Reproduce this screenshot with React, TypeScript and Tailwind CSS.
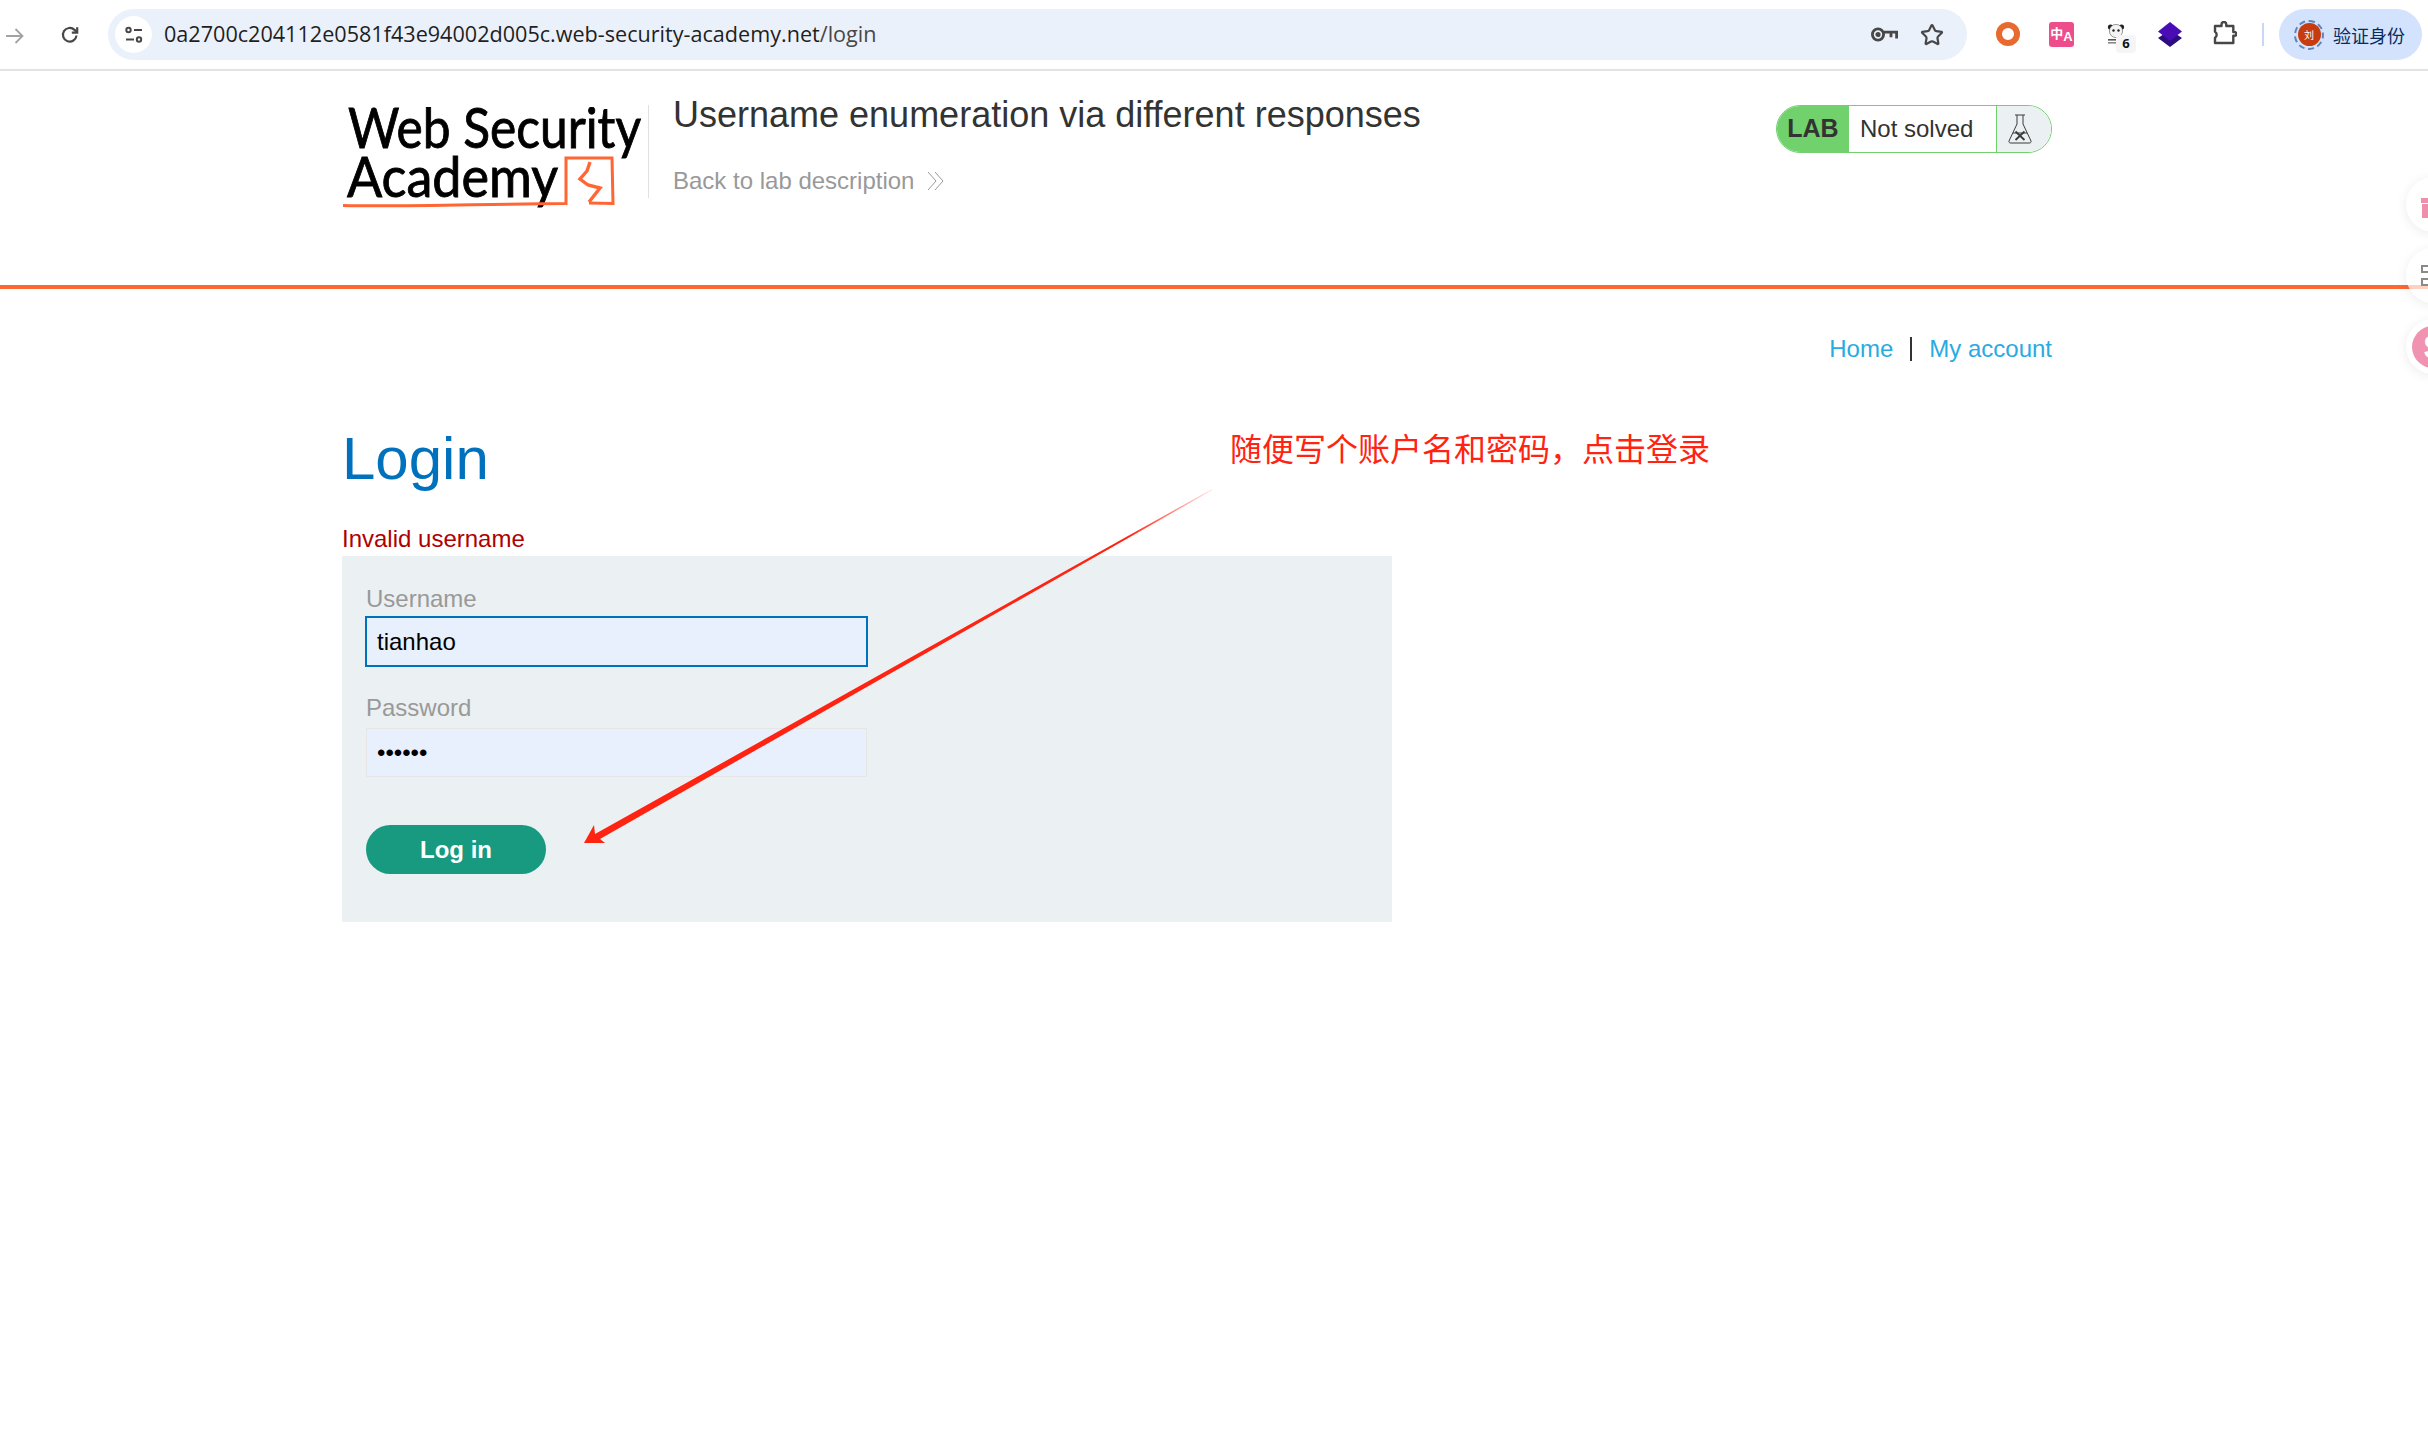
import { Star } from 'lucide-react'

const sans = "font-['Liberation_Sans',Arial,sans-serif]"

function BackArrow() {
  return (
    <svg width="18" height="16" viewBox="0 0 18 16" fill="none" stroke="#a3a3a3" strokeWidth="1.8">
      <path d="M0 8h16M9.5 1l7 7-7 7" />
    </svg>
  )
}

function Reload() {
  return (
    <svg width="20" height="20" viewBox="0 0 20 20" fill="none" stroke="#474747" strokeWidth="2.2">
      <path d="M16.5 10.5a6.8 6.8 0 1 1-2-5.6l2.5 2.4" />
      <path d="M17.2 2.2v5.4h-5.4" />
    </svg>
  )
}

function Tune() {
  return (
    <svg width="20" height="20" viewBox="0 0 20 20" fill="none" stroke="#474747" strokeWidth="2">
      <circle cx="4.5" cy="5" r="2.2" />
      <path d="M10 5h8M2 14.5h8" />
      <circle cx="15" cy="14.5" r="2.2" />
    </svg>
  )
}

function KeyIcon() {
  return (
    <svg width="27" height="15" viewBox="0 0 27 15" fill="none" stroke="#474747" strokeWidth="2.8">
      <circle cx="7" cy="7.5" r="5.6" />
      <circle cx="7" cy="7.5" r="1.2" fill="#474747" />
      <path d="M12.6 5.2h13v6.4M20 5.2v5" />
    </svg>
  )
}

function Panda() {
  return (
    <svg width="18" height="20" viewBox="0 0 18 20">
      <circle cx="3.5" cy="3" r="2.6" fill="#222" />
      <circle cx="14.5" cy="3" r="2.6" fill="#222" />
      <circle cx="9" cy="7" r="6.6" fill="#f4f4f4" stroke="#555" strokeWidth="0.6" />
      <circle cx="6.5" cy="6.5" r="1.2" fill="#222" />
      <circle cx="11.5" cy="6.5" r="1.2" fill="#222" />
      <rect x="1" y="15" width="13" height="1.6" fill="#555" />
      <rect x="1" y="18" width="13" height="1.6" fill="#888" />
    </svg>
  )
}

function Layers() {
  return (
    <svg width="24" height="25" viewBox="0 0 24 25">
      <path d="M12 8 24 16 12 25 0 16Z" fill="#2b0d80" />
      <path d="M12 0 24 9.5 12 19 0 9.5Z" fill="#4a0db5" />
    </svg>
  )
}

function PuzzleIcon() {
  return (
    <svg width="24" height="24" viewBox="0 0 24 24" fill="none" stroke="#474747" strokeWidth="2.4" strokeLinejoin="round">
      <path d="M2 5h6.5V3.4a2.4 2.4 0 0 1 4.8 0V5h7v6h1.2a1.9 1.9 0 0 1 0 3.8h-1.2V22H2v-5.2a3.2 3.2 0 0 0 1.6-3 3.2 3.2 0 0 0-1.6-3Z" />
    </svg>
  )
}

function Toolbar() {
  return (
    <div className="flex h-[71px] items-start border-b-2 border-[#e3e3e3] bg-white pt-[9px]">
      <div className="ml-[6px] mt-[19px] flex w-[18px]"><BackArrow /></div>
      <div className="ml-[36px] mt-[16px] flex w-[20px]"><Reload /></div>
      <div className="ml-[28px] flex h-[51px] w-[1859px] items-center rounded-full bg-[#ebf1fb] pl-[7px] pr-[23px]">
        <div className="flex h-[37px] w-[37px] items-center justify-center rounded-full bg-white"><Tune /></div>
        <span className="ml-[12px] font-['Open_Sans',sans-serif] text-[21.6px] text-[#1f1f1f]">
          0a2700c204112e0581f43e94002d005c.web-security-academy.net<span className="text-[#474747]">/login</span>
        </span>
        <div className="ml-auto flex items-center gap-[22px]">
          <KeyIcon />
          <Star size={24} strokeWidth={2.2} className="text-[#474747]" />
        </div>
      </div>
      <div className="ml-[29px] mt-[13px] h-[24px] w-[24px] rounded-full border-[6px] border-[#e96a2e]" />
      <div className="ml-[29px] mt-[13px] flex h-[25px] w-[25px] items-center justify-center rounded-[3px] bg-[#ee4d8c] text-[13px] font-bold leading-none text-white">
        <span className="mb-[4px] font-['Noto_Sans_CJK_SC',sans-serif]">中</span>
        <span className={`mt-[4px] ${sans}`}>A</span>
      </div>
      <div className="relative ml-[33px] mt-[15px] h-[20px] w-[18px]">
        <Panda />
        <span className="absolute left-[9px] top-[11px] flex h-[18px] w-[20px] items-center justify-center rounded-[4px] bg-[#f5f5f5] font-['Open_Sans',sans-serif] text-[13px] font-bold text-[#111]">6</span>
      </div>
      <div className="ml-[33px] mt-[13px] flex"><Layers /></div>
      <div className="ml-[31px] mt-[12px] flex"><PuzzleIcon /></div>
      <div className="ml-[25px] mt-[14px] h-[23px] w-[2px] bg-[#c7d7f5]" />
      <div className="ml-[15px] flex h-[51px] w-[143px] items-center rounded-full bg-[#d3e3fd] pl-[15px]">
        <div className="flex h-[30px] w-[30px] items-center justify-center rounded-full border-2 border-dashed border-[#5f82b8]">
          <div className="flex h-[23px] w-[23px] items-center justify-center rounded-full bg-[#c63c0e] font-['Noto_Sans_CJK_SC',sans-serif] text-[10px] text-white">刘</div>
        </div>
        <span className="ml-[9px] font-['Noto_Sans_CJK_SC',sans-serif] text-[18px] leading-none text-[#0a2a5e]">验证身份</span>
      </div>
    </div>
  )
}

function Logo() {
  return (
    <svg width="302" height="104" viewBox="0 0 302 104" className="mt-[36px] shrink-0">
      <text x="6" y="41" fontFamily="Lato, sans-serif" fontSize="57" fill="#000" stroke="#000" strokeWidth="0.9" textLength="293" lengthAdjust="spacingAndGlyphs">Web Security</text>
      <text x="5" y="90" fontFamily="Lato, sans-serif" fontSize="57" fill="#000" stroke="#000" strokeWidth="0.9" textLength="211" lengthAdjust="spacingAndGlyphs">Academy</text>
      <path d="M1 98.5C60 100 140 97 224 96.5V51h46l1 45.5-24-.5" fill="none" stroke="#ff6633" strokeWidth="3" />
      <path d="M248 55l-3 9-7 8 8 6 12 3-11 14" fill="none" stroke="#ff6633" strokeWidth="3.4" />
    </svg>
  )
}

function Flask() {
  return (
    <svg width="24" height="30" viewBox="0 0 24 30" fill="none" stroke="#3a3a3a" strokeWidth="1">
      <path d="M7 1h10M9 1v9L1 27a1.5 1.5 0 0 0 1.5 2h19a1.5 1.5 0 0 0 1.5-2L15 10V1" />
      <path d="M5 19h14" />
      <path d="M7.5 17.5 16.5 26M16.5 17.5 7.5 26" strokeWidth="1.8" />
    </svg>
  )
}

function LabStatus() {
  return (
    <div className="mt-[34px] flex h-[48px] w-[276px] overflow-hidden rounded-full border border-[#70d16d] bg-white">
      <div className="flex w-[72px] items-center justify-center bg-[#70d16d] text-[25px] font-bold text-[#333332]">LAB</div>
      <div className="flex flex-1 items-center pl-[11px] text-[24px] text-[#333332]">Not solved</div>
      <div className="flex w-[55px] items-center justify-center border-l border-[#70d16d] bg-[#ebf0f2] pr-[9px]"><Flask /></div>
    </div>
  )
}

function Header() {
  return (
    <div className="ml-[342px] flex h-[214px] w-[1710px] items-start">
      <Logo />
      <div className="ml-[4px] mt-[34px] h-[93px] w-px bg-[#e0e0e0]" />
      <div className="ml-[24px] mt-[22px]">
        <h2 className="text-[36px] leading-[44px] text-[#333332]">Username enumeration via different responses</h2>
        <div className="mt-[26px] flex items-center text-[24px] leading-[36px] text-[#999]">
          Back to lab description
          <svg width="18" height="18" viewBox="0 0 18 18" fill="none" stroke="#999" strokeWidth="1" className="ml-[13px]">
            <path d="M1 0l8 9-8 9M8 0l8 9-8 9" />
          </svg>
        </div>
      </div>
      <div className="ml-auto"><LabStatus /></div>
    </div>
  )
}

function FloatingButtons() {
  return (
    <div className="absolute left-[2406px] top-[177px] flex flex-col gap-[16px]">
      <div className="flex h-[55px] w-[55px] items-center rounded-full bg-white pl-[15px] shadow-[0_2px_12px_rgba(0,0,0,0.08)]">
        <svg width="20" height="26" viewBox="0 0 20 26" fill="#ef8fae">
          <rect x="0" y="6" width="20" height="5" />
          <rect x="1" y="12" width="19" height="14" />
          <path d="M8 6c1-4 5-6 8-5" fill="none" stroke="#ef8fae" strokeWidth="2" />
        </svg>
      </div>
      <div className="flex h-[55px] w-[55px] flex-col justify-center gap-[5px] rounded-full bg-white/70 pl-[15px] shadow-[0_2px_12px_rgba(0,0,0,0.08)]">
        <div className="h-[8px] w-[14px] border-2 border-[#8a8a8a]" />
        <div className="h-[8px] w-[14px] border-2 border-[#8a8a8a]" />
      </div>
      <div className="flex h-[55px] w-[55px] items-center rounded-full bg-white pl-[6px] shadow-[0_2px_12px_rgba(0,0,0,0.08)]">
        <div className="flex h-[42px] w-[42px] items-center justify-center rounded-full bg-[#ef93b0] text-[32px] font-bold leading-none text-white">$</div>
      </div>
    </div>
  )
}

function Arrow() {
  return (
    <svg width="2428" height="1435" viewBox="0 0 2428 1435" className="pointer-events-none absolute left-0 top-0">
      <defs>
        <linearGradient id="fade" gradientUnits="userSpaceOnUse" x1="1212" y1="489" x2="1130" y2="541">
          <stop offset="0" stopColor="#ff2312" stopOpacity="0.1" />
          <stop offset="1" stopColor="#ff2312" />
        </linearGradient>
      </defs>
      <path d="M584 843 594 825 595 834 1212 489 1212.5 490 600 839 605 843Z" fill="url(#fade)" />
    </svg>
  )
}

function LoginForm() {
  return (
    <div className="h-[366px] w-[1050px] bg-[#ebf0f2] px-[24px] pt-[26px]">
      <label className="block text-[24px] leading-[34px] text-[#999]">Username</label>
      <div className="ml-[-1px] flex h-[51px] w-[503px] items-center border-2 border-[#0071bc] bg-[#e8f0fe] pl-[10px] text-[24px] text-black">tianhao</div>
      <label className="mt-[25px] block text-[24px] leading-[32px] text-[#999]">Password</label>
      <div className="mt-[4px] flex h-[49px] w-[501px] items-center border border-[#e6e6e6] bg-[#e8f0fe] pl-[10px] text-[24px] leading-none text-black">••••••</div>
      <button className="mt-[48px] flex h-[49px] w-[180px] items-center justify-center rounded-full bg-[#179a7f] text-[24px] font-bold text-white">Log in</button>
    </div>
  )
}

export default function App() {
  return (
    <div className={`relative h-[1435px] w-[2428px] overflow-hidden bg-white ${sans}`}>
      <Toolbar />
      <Header />
      <div className="h-[4px] bg-[#ff6633]" />
      <div className="ml-[342px] w-[1710px]">
        <div className="mt-[42px] flex h-[36px] items-center justify-end text-[24px] text-[#29abe2]">
          <span>Home</span>
          <span className="ml-[17px] mr-[17px] h-[24px] w-[2px] bg-[#333332]" />
          <span>My account</span>
        </div>
        <h1 className="mt-[54px] text-[60px] leading-[76px] text-[#0071bc]">Login</h1>
        <p className="mt-[24px] text-[24px] leading-[35px] text-[#ae0000]">Invalid username</p>
        <LoginForm />
      </div>
      <Arrow />
      <div className="absolute left-[1230px] top-[423px] font-['Noto_Sans_CJK_SC',sans-serif] text-[32px] leading-[48px] text-[#ff2312]">{'随便写个账户名和密码\uFF0C点击登录'}</div>
      <FloatingButtons />
    </div>
  )
}
